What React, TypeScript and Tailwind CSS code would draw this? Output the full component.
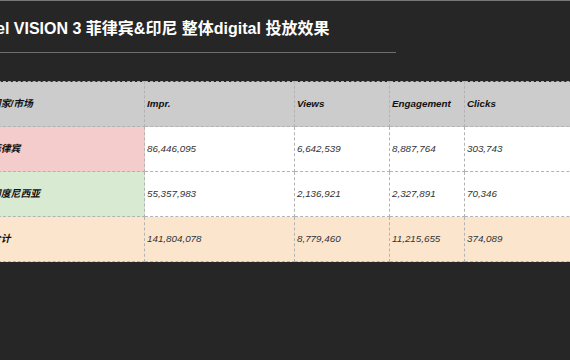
import React from 'react';

const font = { fontFamily: '"Liberation Sans", "Noto Sans CJK SC", sans-serif' };

const rows = [
  { label: '菲律宾', bg: 'bg-[#f4cccc]', rowBg: 'bg-white', values: ['86,446,095', '6,642,539', '8,887,764', '303,743'] },
  { label: '印度尼西亚', bg: 'bg-[#d9ead3]', rowBg: 'bg-white', values: ['55,357,983', '2,136,921', '2,327,891', '70,346'] },
  { label: '合计', bg: 'bg-[#fce5cd]', rowBg: 'bg-[#fce5cd]', values: ['141,804,078', '8,779,460', '11,215,655', '374,089'] },
];

const headers = ['Impr.', 'Views', 'Engagement', 'Clicks'];
const widths = ['w-[150px]', 'w-[95px]', 'w-[75px]', 'w-[150px]'];

export default function App() {
  return (
    <div className="w-[570px] h-[360px] overflow-hidden bg-[#262626] border-t border-[#767676]" style={font}>
      <div className="pt-[18px]">
        <h1 className="ml-[-28px] whitespace-nowrap text-[16px] leading-[20px] font-bold text-white">
          Pixel VISION 3 菲律宾&amp;印尼 整体digital 投放效果
        </h1>
        <div className="mt-[13px] h-px w-[396px] bg-[#6e6e6e]" />
      </div>

      <table className="mt-[28px] ml-[-12px] w-[626px] min-w-[626px] border-collapse table-fixed text-[9.8px] italic">
        <colgroup>
          <col className="w-[156px]" />
          {widths.map((w, i) => (
            <col key={i} className={w} />
          ))}
        </colgroup>
        <thead>
          <tr className="bg-[#cccccc] h-[45px]">
            <th className="px-[2px] text-left font-bold text-[#111] border border-dashed border-[#b3b3b3]">国家/市场</th>
            {headers.map((h) => (
              <th key={h} className="px-[2px] text-left font-bold text-[#111] border border-dashed border-[#b3b3b3]">
                {h}
              </th>
            ))}
          </tr>
        </thead>
        <tbody>
          {rows.map((r) => (
            <tr key={r.label} className={`h-[45px] ${r.rowBg}`}>
              <td className={`px-[2px] font-bold text-[#111] border border-dashed border-[#b3b3b3] ${r.bg}`}>{r.label}</td>
              {r.values.map((v, i) => (
                <td key={i} className="px-[2px] text-[#333] border border-dashed border-[#b3b3b3]">
                  {v}
                </td>
              ))}
            </tr>
          ))}
        </tbody>
      </table>
    </div>
  );
}
